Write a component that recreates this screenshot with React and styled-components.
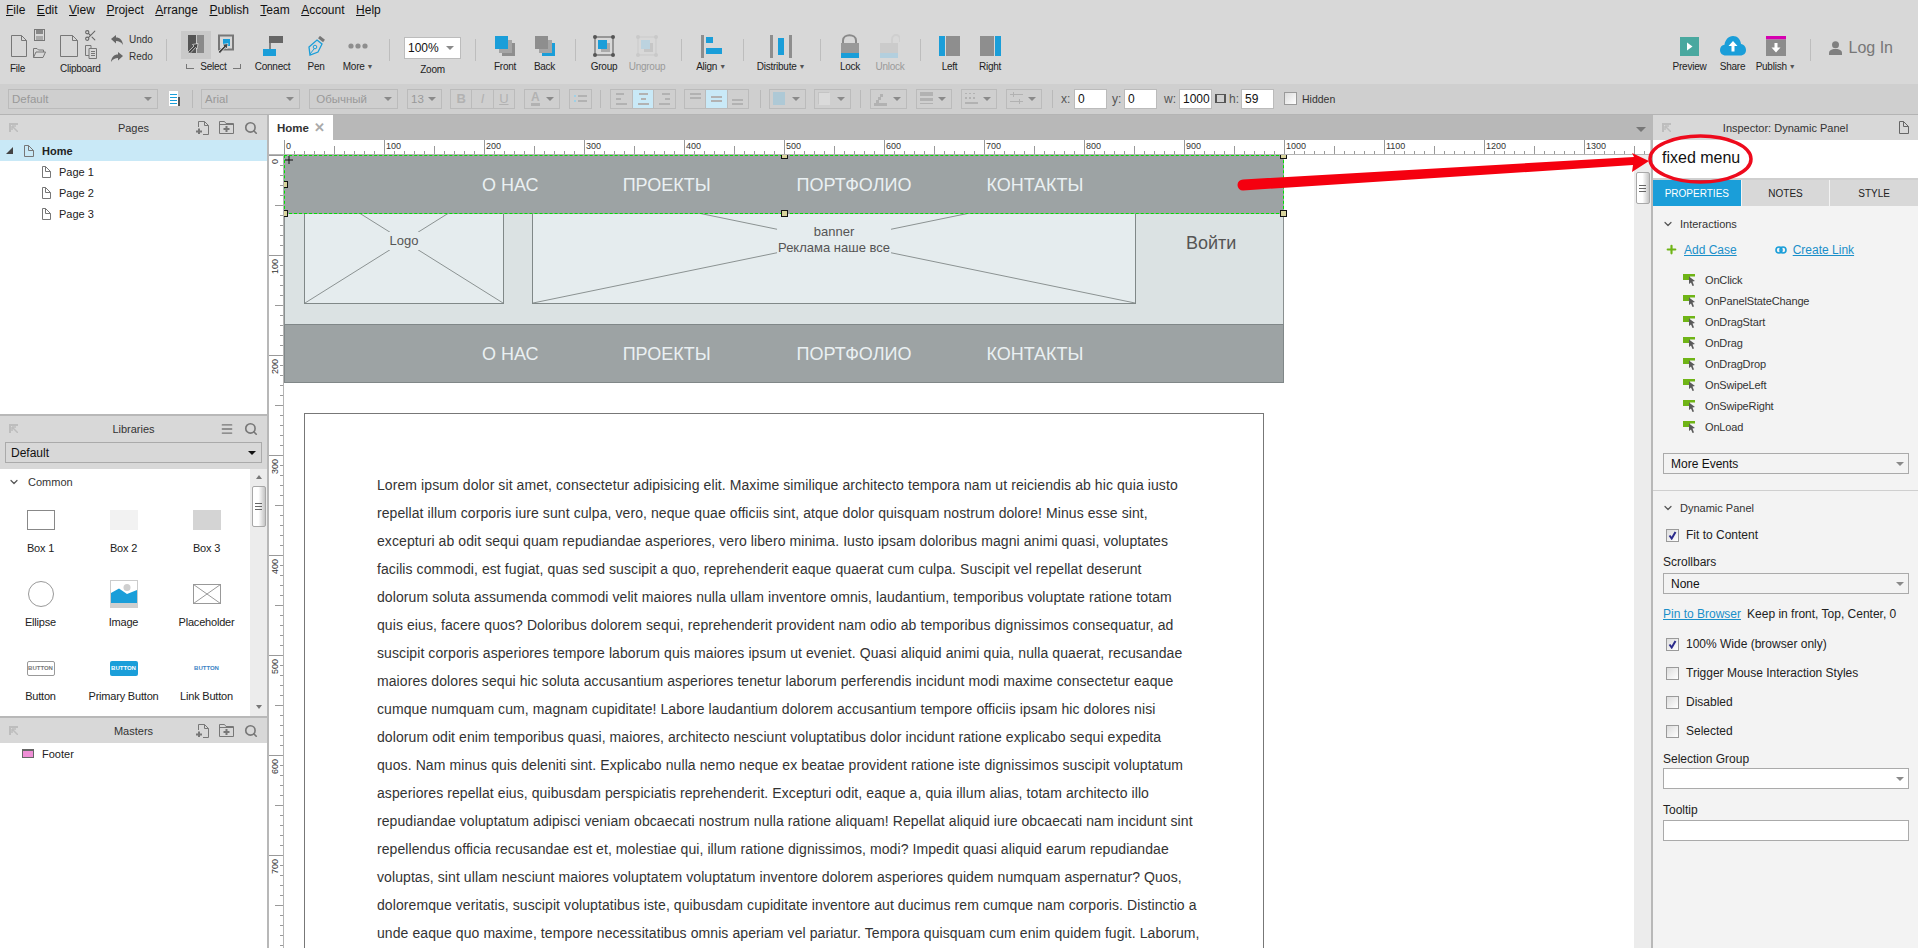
import React from "react";
import styled, { createGlobalStyle } from "styled-components";
import { Scissors, Search, ChevronDown, Menu as MenuIcon, Plus } from "lucide-react";

const GlobalStyle = createGlobalStyle`
  html, body { margin: 0; padding: 0; height: 100%; overflow: hidden; background: #fff; }
  body { font-family: "Liberation Sans", Arial, sans-serif; color: #222; }
  * { box-sizing: border-box; }
`;

const BLUE = "#1a9ed9";
const GREY = "#8e8e8e";

// Data
const menuItems = ["File", "Edit", "View", "Project", "Arrange", "Publish", "Team", "Account", "Help"];
const navItems = ["О НАС", "ПРОЕКТЫ", "ПОРТФОЛИО", "КОНТАКТЫ"];
const events = ["OnClick", "OnPanelStateChange", "OnDragStart", "OnDrag", "OnDragDrop", "OnSwipeLeft", "OnSwipeRight", "OnLoad"];
const loremLines = [
  "Lorem ipsum dolor sit amet, consectetur adipisicing elit. Maxime similique architecto tempora nam ut reiciendis ab hic quia iusto",
  "repellat illum corporis iure sunt culpa, vero, neque quae officiis sint, atque dolor quisquam nostrum dolore! Minus esse sint,",
  "excepturi ab odit sequi quam repudiandae asperiores, vero libero minima. Iusto ipsam doloribus magni animi quasi, voluptates",
  "facilis commodi, est fugiat, quas sed suscipit a quo, reprehenderit eaque quaerat cum culpa. Suscipit vel repellat deserunt",
  "dolorum soluta assumenda commodi velit maiores nulla ullam inventore omnis, laudantium, temporibus voluptate ratione totam",
  "quis eius, facere quos? Doloribus dolorem sequi, reprehenderit provident nam odio ab temporibus dignissimos consequatur, ad",
  "suscipit corporis asperiores tempore laborum quis maiores ipsum ut eveniet. Quasi aliquid animi quia, nulla quaerat, recusandae",
  "maiores dolores sequi hic soluta accusantium asperiores tenetur laborum perferendis incidunt modi maxime consectetur eaque",
  "cumque numquam cum, magnam cupiditate! Labore laudantium dolorem accusantium tempore officiis ipsam hic dolores nisi",
  "dolorum odit enim temporibus quasi, maiores, architecto nesciunt voluptatibus dolor incidunt ratione explicabo sequi expedita",
  "quos. Nam minus quis deleniti sint. Explicabo nulla nemo neque ex beatae provident ratione iste dignissimos suscipit voluptatum",
  "asperiores repellat eius, quibusdam perspiciatis reprehenderit. Excepturi odit, eaque a, quia illum alias, totam architecto illo",
  "repudiandae voluptatum adipisci veniam obcaecati nostrum nulla ratione aliquam! Repellat aliquid iure obcaecati nam incidunt sint",
  "repellendus officia recusandae est et, molestiae qui, illum ratione dignissimos, modi? Impedit quasi aliquid earum repudiandae",
  "voluptas, sint ullam nesciunt maiores voluptatem voluptatum inventore dolorem asperiores quidem numquam aspernatur? Quos,",
  "doloremque veritatis, suscipit voluptatibus iste, quibusdam cupiditate inventore aut ducimus rem cumque nam corporis. Distinctio a",
  "unde eaque quo maxime, tempore necessitatibus omnis aperiam vel pariatur. Tempora quisquam cum enim quidem fugit. Laborum,",
];

// Small drawings
const Rects = ({ w, h, items, c = GREY }) => (
  <svg width={w} height={h} viewBox={`0 0 ${w} ${h}`}>
    {items.map(([x, y, rw, rh, fill], i) => (
      <rect key={i} x={x} y={y} width={rw} height={rh} fill={fill || c} />
    ))}
  </svg>
);

const PageIcon = ({ w = 16, h = 22, c = "#777" }) => (
  <svg width={w} height={h} viewBox={`0 0 ${w} ${h}`} fill="none" stroke={c}>
    <path d={`M.5.5H${w - 5.5}L${w - .5} 5.5V${h - .5}H.5Z M${w - 5.5} .5V5.5H${w - .5}`} />
  </svg>
);

const SaveIcon = () => (
  <svg width="11" height="12" viewBox="0 0 11 12">
    <rect x=".5" y=".5" width="10" height="11" fill="none" stroke="#777" />
    <rect x="2" y="1" width="7" height="4" fill="#888" />
    <rect x="2" y="7" width="7" height="4" fill="#aaa" />
  </svg>
);

const FolderIcon = () => (
  <svg width="13" height="10" viewBox="0 0 13 10" fill="none" stroke="#777">
    <path d="M.5 9.5V.5H4L5.5 2H10.5V4M.5 9.5L3 4H12.5L10 9.5Z" />
  </svg>
);

const CopyIcon = () => (
  <svg width="12" height="14" viewBox="0 0 12 14" fill="none" stroke="#777">
    <path d="M.5.5H6V10.5H.5Z" />
    <path d="M4 3.5H11.5V13.5H4Z" fill="#d8d8d8" />
    <path d="M6 6.5H10M6 8.5H10M6 10.5H10" />
  </svg>
);

const UndoIcon = ({ flip }) => (
  <svg width="12" height="10" viewBox="0 0 12 10">
    <path transform={flip ? "translate(12 0) scale(-1 1)" : undefined} d="M0 4L5 0V2.5C9 2.5 11.5 5 12 10C10 7 8 6 5 6V8.5Z" fill="#666" />
  </svg>
);

const PointerMark = () => <path d="M1 18L7 12L5.5 10.5L11 9.5L10 15L8.5 13.5L3 19.5Z" fill="#444" stroke="#fff" strokeWidth=".6" />;

const SelectOneIcon = () => (
  <svg width="18" height="22" viewBox="0 0 18 22">
    <rect x="1" y="1" width="8" height="18" fill="#555" />
    <rect x="10" y="1" width="7" height="18" fill="#8a8a8a" />
    <PointerMark />
  </svg>
);

const SelectTwoIcon = () => (
  <svg width="18" height="22" viewBox="0 0 18 22">
    <rect x="2" y="1.5" width="14" height="14" fill="#d8d8d8" stroke="#777" strokeWidth="2" />
    <rect x="6" y="5" width="7" height="7" fill={BLUE} />
    <PointerMark />
  </svg>
);

const ConnectIcon = () => (
  <svg width="20" height="20" viewBox="0 0 20 20">
    <rect x="6" y="0" width="14" height="7" fill="#666" />
    <path d="M7 7V13" stroke="#666" strokeWidth="1.5" />
    <rect x="0" y="13" width="13" height="7" fill={BLUE} />
  </svg>
);

const PenIcon = () => (
  <svg width="18" height="20" viewBox="0 0 18 20" fill="none">
    <path d="M12 1L17 5" stroke="#777" strokeWidth="3" />
    <path d="M10 4L15 8L11 16L3 19L2 11Z" stroke={BLUE} strokeWidth="1.3" />
    <circle cx="8" cy="11" r="1.8" stroke={BLUE} />
    <path d="M3 18L7 13" stroke={BLUE} />
  </svg>
);

const DotsIcon = () => (
  <svg width="20" height="20" viewBox="0 0 20 20" fill="#8e8e8e">
    <circle cx="3" cy="10" r="2.6" /><circle cx="10" cy="10" r="2.6" /><circle cx="17" cy="10" r="2.6" />
  </svg>
);

const StackIcon = ({ top, mid, low }) => (
  <Rects w={20} h={20} items={[
    [7, 7, 13, 13, low],
    [4, 4, 13, 13, mid],
    [0, 0, 13, 13, top],
  ]} />
);

const GroupIcon = ({ faded }) => {
  const c = faded ? "#c9c9c9" : "#555";
  return (
    <svg width="22" height="22" viewBox="0 0 22 22">
      <rect x="2" y="2" width="18" height="18" fill="none" stroke={c} />
      <rect x="8" y="8" width="9" height="9" fill={faded ? "#c6c6c6" : "#aaa"} />
      <rect x="5" y="5" width="9" height="9" fill={faded ? "#bcd3df" : BLUE} />
      {[[2, 2], [20, 2], [2, 20], [20, 20]].map(([x, y]) => <circle key={`${x}${y}`} cx={x} cy={y} r="2" fill={c} />)}
    </svg>
  );
};

const LockIcon = ({ faded }) => (
  <svg width="20" height="24" viewBox="0 0 20 24" fill="none">
    {faded
      ? <path d="M12 10V5.5C12 -.5 20 -.5 20 5.5V8" stroke="#cfcfcf" strokeWidth="2" />
      : <path d="M3 10V6.5C3 -.5 16 -.5 16 6.5V10" stroke="#8a8a8a" strokeWidth="2" />}
    <rect x={faded ? 0 : 1} y="9" width="18" height="10" fill={faded ? "#cbcbcb" : "#999"} />
    <rect x={faded ? 0 : 1} y="19" width="18" height="5" fill={faded ? "#b3cfde" : BLUE} />
  </svg>
);

const PreviewIcon = () => (
  <svg width="19" height="19" viewBox="0 0 19 19">
    <rect width="19" height="19" fill="#49a89f" />
    <path d="M7 5.5L12.5 9.5L7 13.5Z" fill="#fff" />
  </svg>
);

const ShareIcon = () => (
  <svg width="26" height="20" viewBox="0 0 26 20">
    <path d="M6 19.5C2 19.5 0 17 0 14C0 11 2 9 4.5 8.8C5 4 8.5 0 13 0C17.5 0 20.5 3.5 21 8C24 8.5 26 11 26 14C26 17 24 19.5 20 19.5Z" fill={BLUE} />
    <path d="M13 5L17.5 10H14.5V15.5H11.5V10H8.5Z" fill="#fff" />
  </svg>
);

const PublishIcon = () => (
  <svg width="20" height="20" viewBox="0 0 20 20">
    <rect width="20" height="3.5" fill="#d600b0" />
    <rect y="3.5" width="20" height="16.5" fill="#8c8c8c" />
    <path d="M10 16.5L5.5 11.5H8.5V7H11.5V11.5H14.5Z" fill="#fff" />
  </svg>
);

const UserIcon = () => (
  <svg width="13" height="14" viewBox="0 0 13 14" fill="#808080">
    <circle cx="6.5" cy="3.7" r="3.5" />
    <path d="M0 14V11.5C0 9.5 2.5 8.5 4.5 8H8.5C10.5 8.5 13 9.5 13 11.5V14Z" />
  </svg>
);

const DockIcon = () => (
  <svg width="9" height="9" viewBox="0 0 9 9" fill="#bdbdbd">
    <path d="M0 0H9V2H2V9H0Z" /><path d="M3 3L9 9M3 3V7M3 3H7" stroke="#bdbdbd" strokeWidth="1.5" />
  </svg>
);

const NewPageIcon = () => (
  <svg width="14" height="14" viewBox="0 0 14 14" fill="none" stroke="#777">
    <path d="M3.5 6V.5H9.5L13.5 4.5V13.5H8" /><path d="M9.5.5V4.5H13.5" />
    <path d="M4 7.5V13M1 10.5H7" strokeWidth="2" />
  </svg>
);

const NewFolderIcon = () => (
  <svg width="15" height="13" viewBox="0 0 15 13" fill="none" stroke="#777">
    <path d="M.5 12.5V.5H5.5L7 2.5H14.5V12.5Z" />
    <path d="M.5 3.5H14.5" /><path d="M7.5 5V11M4.5 8H10.5" strokeWidth="2" />
  </svg>
);

const EventIcon = () => (
  <svg width="13" height="12" viewBox="0 0 13 12">
    <path d="M0 0H12V2.5H7V6H0Z" fill="#6fb416" />
    <path d="M6 2.5L12 7L9.5 7.5L11 11.5L9.5 12L8 8.5L6 10Z" fill="#5a5a5a" />
  </svg>
);

const LinkIcon = () => (
  <svg width="12" height="8" viewBox="0 0 12 8" fill="none" stroke={BLUE} strokeWidth="1.6">
    <rect x="1" y="1" width="6" height="6" rx="3" /><rect x="5" y="1" width="6" height="6" rx="3" />
  </svg>
);

const CheckMark = () => (
  <svg width="9" height="9" viewBox="0 0 9 9"><path d="M1.5 4.5L3.7 7.5L7.5 1" fill="none" stroke="#2b2b8c" strokeWidth="2" /></svg>
);

const ImageIcon = () => (
  <svg width="28" height="28" viewBox="0 0 28 28">
    <rect x=".5" y=".5" width="27" height="27" fill="#fff" stroke="#ccc" />
    <rect y="23" width="28" height="5" fill="#cfcfcf" />
    <circle cx="17" cy="7.5" r="3.5" fill="#cfcfcf" />
    <path d="M1 23V13L9 8.5L17 14L27 10V23Z" fill={BLUE} />
  </svg>
);

const PlaceholderIcon = () => (
  <svg width="28" height="20" viewBox="0 0 28 20" fill="none" stroke="#999">
    <rect x=".5" y=".5" width="27" height="19" /><path d="M.5.5L27.5 19.5M27.5.5L.5 19.5" />
  </svg>
);

const OriginCross = () => (
  <svg width="8" height="8" viewBox="0 0 8 8"><path d="M4 0V8M0 4H8" stroke="#111" strokeWidth="1" /></svg>
);

// Shell
const Page = styled.div`
  position: relative;
  width: 1918px;
  height: 948px;
  overflow: hidden;
  background: #d8d8d8;
`;

const MenuBar = styled.nav`
  display: flex;
  height: 20px;
  padding-left: 6px;
  gap: 11.5px;
  align-items: center;
  font-size: 12px;
  color: #111;
`;

const MenuEntry = styled.span`
  &::first-letter { text-decoration: underline; }
`;

const Toolbar = styled.div`
  display: flex;
  height: 64px;
  padding-top: 11px;
  align-items: flex-start;
`;

const Tool = styled.div`
  display: flex;
  flex-direction: column;
  align-items: center;
  flex: none;
  width: ${(p) => p.$w}px;
  margin-left: ${(p) => p.$ml || 0}px;
`;

const ToolIcon = styled.div`
  display: flex;
  align-items: center;
  justify-content: center;
  height: 28px;
  width: 100%;
  padding-top: 2px;
`;

const ToolLabel = styled.div`
  display: flex;
  align-items: center;
  gap: 2px;
  height: 14px;
  font-size: 10px;
  letter-spacing: -0.25px;
  white-space: nowrap;
  color: ${(p) => (p.$off ? "#9a9a9a" : "#222")};
`;

const SmallMark = styled.span`
  font-size: 7px;
  color: #555;
`;

const ToolSep = styled.div`
  flex: none;
  width: 1px;
  height: 22px;
  margin: 8px ${(p) => p.$r || 0}px 0 ${(p) => p.$l || 0}px;
  background: #bdbdbd;
`;

const SmallStack = styled.div`
  display: flex;
  flex-direction: column;
  gap: ${(p) => p.$gap || 7}px;
  align-items: center;
  margin-top: -5px;
`;

const SplitTool = styled.div`
  display: flex;
  flex-direction: column;
  flex: none;
  width: ${(p) => p.$w}px;
  padding-left: ${(p) => p.$pl || 0}px;
`;

const SplitIcons = styled.div`
  display: flex;
  align-items: center;
  gap: 6px;
  height: 28px;
  padding-top: 2px;
`;

const SplitLabel = styled(ToolLabel)`
  margin-top: 2px;
  margin-left: ${(p) => p.$ml || 0}px;
`;

const UndoRow = styled.div`
  display: flex;
  align-items: center;
  gap: 6px;
  height: 17px;
  font-size: 10px;
  color: #333;
`;

const UndoTool = styled.div`
  flex: none;
  width: 60px;
  padding-left: 5px;
`;

const SelectTool = styled.div`
  flex: none;
  width: 64px;
`;

const SelectIcons = styled.div`
  display: flex;
  align-items: center;
  height: 28px;
`;

const SelectCell = styled.div`
  display: flex;
  align-items: center;
  justify-content: center;
  width: 30px;
  height: 28px;
  background: ${(p) => (p.$on ? "#c9c9c9" : "transparent")};
`;

const SelectCaption = styled.div`
  display: flex;
  justify-content: space-between;
  align-items: center;
  height: 14px;
  width: 55px;
  margin-left: 5px;
  font-size: 10px;
  letter-spacing: -0.25px;
`;

const Corner = styled.span`
  width: 8px;
  height: 5px;
  border-bottom: 1px solid #777;
  border-${(p) => p.$side}: 1px solid #777;
`;

const ZoomBox = styled.div`
  display: flex;
  align-items: center;
  justify-content: space-between;
  width: 57px;
  height: 22px;
  margin: 6px 0 3px;
  padding: 0 6px 0 3px;
  background: #fff;
  border: 1px solid #bcbcbc;
  font-size: 12px;
  color: #111;
`;

const Caret = styled.span`
  flex: none;
  width: 0;
  height: 0;
  border-left: ${(p) => p.$s || 4}px solid transparent;
  border-right: ${(p) => p.$s || 4}px solid transparent;
  border-top: ${(p) => p.$s || 4}px solid ${(p) => p.$c || "#8a8a8a"};
`;

const RightTools = styled.div`
  display: flex;
  align-items: flex-start;
  margin-left: auto;
`;

const LogIn = styled.div`
  display: flex;
  align-items: center;
  gap: 7px;
  height: 20px;
  margin: 7px 25px 0 18px;
  font-size: 16px;
  color: #777;
`;

// Format bar
const FormatBar = styled.div`
  display: flex;
  align-items: center;
  height: 31px;
  padding: 0 0 1px 8px;
  background: #cfcfcf;
  border-bottom: 1px solid #b4b4b4;
`;

const FormatSelect = styled.div`
  display: flex;
  align-items: center;
  justify-content: space-between;
  flex: none;
  width: ${(p) => p.$w}px;
  height: 20px;
  margin-left: ${(p) => p.$ml || 0}px;
  padding: 0 5px 0 3px;
  border: 1px solid #bbb;
  font-size: 11.5px;
  color: #999;
`;

const StyleIconSlot = styled.span`
  display: flex;
  flex: none;
  margin-left: 10px;
`;

const FormatSep = styled.div`
  flex: none;
  width: 1px;
  height: 18px;
  margin-left: ${(p) => p.$ml}px;
  background: #b9b9b9;
`;

const CellGroup = styled.div`
  display: flex;
  flex: none;
  width: ${(p) => p.$w}px;
  height: 20px;
  margin-left: ${(p) => p.$ml || 0}px;
  border: 1px solid #bbb;
`;

const Cell = styled.div`
  display: flex;
  flex: 1;
  align-items: center;
  justify-content: center;
  font-size: 13px;
  color: #b2b2b2;
  font-weight: ${(p) => (p.$bold ? 700 : 400)};
  font-style: ${(p) => (p.$italic ? "italic" : "normal")};
  text-decoration: ${(p) => (p.$under ? "underline" : "none")};
  background: ${(p) => (p.$on ? "#c9e9f7" : "transparent")};
  & + & { border-left: 1px solid #bbb; }
`;

const ColorLetter = styled.span`
  margin-left: 3px;
  height: 15px;
  line-height: 12px;
  font-size: 12px;
  font-weight: 700;
  color: #b2b2b2;
  border-bottom: 3px solid #b2b2b2;
`;

const CoordLabel = styled.span`
  flex: none;
  width: ${(p) => p.$w}px;
  margin-left: ${(p) => p.$ml || 0}px;
  font-size: 12px;
  color: #555;
`;

const CoordInput = styled.div`
  flex: none;
  width: 33px;
  height: 20px;
  padding: 0 3px;
  line-height: 19px;
  background: #fff;
  border: 1px solid #bbb;
  font-size: 12px;
  color: #111;
`;

const SizeLink = styled.span`
  display: flex;
  justify-content: space-between;
  flex: none;
  width: 11px;
  height: 9px;
  margin-left: 3px;
  &::before, &::after {
    content: "";
    width: 4px;
    border-style: solid;
    border-color: #555;
  }
  &::before { border-width: 1px 0 1px 2px; }
  &::after { border-width: 1px 2px 1px 0; }
`;

const CheckBox = styled.span`
  display: flex;
  flex: none;
  align-items: center;
  justify-content: center;
  width: 13px;
  height: 13px;
  border: 1px solid #9a9a9a;
  background: linear-gradient(135deg, #dcdcdc, #fff);
`;

const HiddenRow = styled.label`
  display: flex;
  align-items: center;
  gap: 5px;
  margin-left: 10px;
  font-size: 10.5px;
  color: #333;
`;

// Body
const Body = styled.div`
  display: flex;
  height: 833px;
`;

const LeftPanel = styled.aside`
  display: flex;
  flex-direction: column;
  flex: none;
  width: 269px;
  background: #fff;
  border-right: 2px solid #b8b8b8;
`;

const PanelHead = styled.header`
  display: grid;
  grid-template-columns: 1fr auto 1fr;
  align-items: center;
  flex: none;
  height: 25px;
  padding: 0 9px;
  background: #d8d8d8;
  font-size: 11px;
  color: #333;
`;

const HeadIcons = styled.div`
  display: flex;
  align-items: center;
  justify-content: flex-end;
  gap: 10px;
  color: #777;
`;

const PagesPane = styled.section`
  flex: none;
  height: 299px;
`;

const PageRow = styled.div`
  display: flex;
  align-items: center;
  height: 21px;
  padding-left: ${(p) => (p.$home ? 6 : 42)}px;
  gap: 8px;
  font-size: 11px;
  font-weight: ${(p) => (p.$home ? 700 : 400)};
  color: #222;
  background: ${(p) => (p.$home ? "#c9e9f7" : "transparent")};
`;

const Triangle = styled.span`
  width: 0;
  height: 0;
  border-left: 7px solid transparent;
  border-bottom: 7px solid #444;
  margin-right: 3px;
`;

const PaneLine = styled.div`
  flex: none;
  height: 2px;
  background: #b8b8b8;
`;

const LibSelectBar = styled.div`
  flex: none;
  height: 28px;
  padding: 1px 5px 0;
  background: #d8d8d8;
`;

const LibSelect = styled.div`
  display: flex;
  align-items: center;
  justify-content: space-between;
  height: 21px;
  padding: 0 5px;
  border: 1px solid #aaa;
  font-size: 12px;
  color: #111;
`;

const LibBody = styled.div`
  display: flex;
  flex: none;
  height: 247px;
`;

const LibList = styled.div`
  flex: 1;
  overflow: hidden;
`;

const SectionTitle = styled.div`
  display: flex;
  align-items: center;
  gap: ${(p) => p.$gap || 8}px;
  height: 16px;
  margin: ${(p) => p.$mt || 0}px 0 0 ${(p) => p.$ml || 8}px;
  font-size: 11px;
  color: #333;
`;

const LibGrid = styled.div`
  display: grid;
  grid-template-columns: repeat(3, 83px);
  grid-auto-rows: 74px;
  margin: 15px 0 0 -1px;
`;

const LibItem = styled.div`
  display: flex;
  flex-direction: column;
  align-items: center;
  font-size: 11px;
  letter-spacing: -0.2px;
  color: #222;
`;

const LibIcon = styled.div`
  display: flex;
  align-items: center;
  justify-content: center;
  height: 30px;
  margin-bottom: 7px;
`;

const Swatch = styled.div`
  width: 28px;
  height: 20px;
  background: ${(p) => p.$bg};
  border: ${(p) => (p.$line ? "1px solid #888" : "none")};
`;

const Round = styled.div`
  width: 26px;
  height: 26px;
  border-radius: 50%;
  border: 1px solid #999;
`;

const MiniButton = styled.div`
  display: flex;
  align-items: center;
  justify-content: center;
  width: 28px;
  height: 15px;
  font-size: 6px;
  font-weight: 700;
  letter-spacing: 0;
  border-radius: 2px;
  color: ${(p) => (p.$kind === "primary" ? "#fff" : p.$kind === "link" ? "#3b82c4" : "#777")};
  background: ${(p) => (p.$kind === "primary" ? BLUE : "transparent")};
  border: ${(p) => (p.$kind === "plain" ? "1px solid #999" : "none")};
`;

const ScrollTrack = styled.div`
  display: flex;
  flex-direction: column;
  align-items: center;
  justify-content: ${(p) => (p.$top ? "flex-start" : "space-between")};
  flex: none;
  width: 17px;
  background: #ececec;
`;

const ScrollThumb = styled.div`
  display: flex;
  align-items: center;
  justify-content: center;
  width: 14px;
  height: ${(p) => p.$h}px;
  margin-top: ${(p) => p.$mt || 0}px;
  border: 1px solid #a8a8a8;
  border-radius: 2px;
  background: linear-gradient(90deg, #fff, #fff 45%, #c4c4c4);
  &::after {
    content: "";
    width: 7px;
    height: 7px;
    background: repeating-linear-gradient(#666 0 1px, transparent 1px 3px);
  }
`;

const ScrollArrow = styled.span`
  width: 0;
  height: 0;
  margin: ${(p) => (p.$up ? "6px 0 0" : "0 0 7px")};
  border-left: 3px solid transparent;
  border-right: 3px solid transparent;
  ${(p) => (p.$up ? "border-bottom" : "border-top")}: 4px solid #777;
`;

const ScrollTop = styled.div`
  display: flex;
  flex-direction: column;
  align-items: center;
`;

const FooterRow = styled.div`
  display: flex;
  align-items: center;
  gap: 8px;
  height: 21px;
  padding-left: 22px;
  font-size: 11px;
  color: #222;
`;

const MasterIcon = styled.span`
  width: 12px;
  height: 9px;
  border: 1px solid #666;
  border-top-width: 2px;
  background: #ef8fd6;
`;

// Centre
const Center = styled.main`
  display: flex;
  flex-direction: column;
  flex: 1;
  min-width: 0;
`;

const TabBar = styled.div`
  display: flex;
  align-items: stretch;
  justify-content: space-between;
  flex: none;
  height: 25px;
  background: #b8b8b8;
`;

const Tab = styled.div`
  display: flex;
  align-items: center;
  justify-content: space-between;
  width: 64px;
  padding: 0 8px;
  background: #fff;
  font-size: 11.5px;
  font-weight: 700;
  color: #333;
`;

const TabClose = styled.span`
  font-size: 13px;
  color: #aaa;
`;

const TabMenu = styled.div`
  display: flex;
  align-items: center;
  padding: 3px 5px 0 0;
`;

const RulerTop = styled.svg`
  display: block;
  flex: none;
  font-family: "Liberation Sans", Arial, sans-serif;
  font-size: 9px;
`;

const Workspace = styled.div`
  display: flex;
  flex: 1;
  min-height: 0;
`;

const RulerSide = styled.svg`
  display: block;
  flex: none;
  font-family: "Liberation Sans", Arial, sans-serif;
  font-size: 9px;
`;

const Canvas = styled.div`
  position: relative;
  flex: 1;
  overflow: hidden;
  background: #fff;
`;

const SiteHeader = styled.div`
  display: flex;
  width: 1000px;
  height: 169px;
  padding: 23px 0 0 19px;
  background: #dbe2e3;
  border-left: 1px solid #8a9090;
  border-right: 1px solid #8a9090;
`;

const Placeholder = styled.div`
  position: relative;
  flex: none;
  width: ${(p) => p.$w}px;
  height: 126px;
  margin-left: ${(p) => p.$ml || 0}px;
  background: #e5ecee;
  border: 1px solid #808888;
  svg { display: block; width: 100%; height: 100%; }
`;

const PlaceholderText = styled.div`
  position: absolute;
  top: ${(p) => p.$top}px;
  left: 50%;
  transform: translateX(-50%);
  padding: ${(p) => p.$pad};
  background: #e5ecee;
  text-align: center;
  font-size: 13px;
  line-height: 16px;
  white-space: nowrap;
  color: #555;
`;

const SignIn = styled.div`
  margin: 55px 0 0 50px;
  font-size: 18px;
  line-height: 20px;
  color: #555;
`;

const SiteNav = styled.div`
  display: flex;
  align-items: center;
  width: 1000px;
  height: 59px;
  padding: 1px 0 0 197px;
  background: #9da3a4;
  border: 1px solid #808788;
  font-size: 18px;
  color: #eaf0f2;
`;

const NavLink = styled.span`
  margin-left: ${(p) => p.$ml}px;
  white-space: nowrap;
`;

const FixedMenu = styled(SiteNav)`
  position: absolute;
  top: 0;
  left: 0;
  border: 1px dashed #00e000;
`;

const Handle = styled.i`
  position: absolute;
  left: ${(p) => p.$x}px;
  top: ${(p) => p.$y}px;
  width: 7px;
  height: 7px;
  background: #d8d49c;
  border: 1px solid #111;
`;

const OriginMark = styled.span`
  position: absolute;
  display: flex;
  left: 0;
  top: 0;
`;

const TextFrame = styled.div`
  width: 960px;
  height: 700px;
  margin: 30px 0 0 20px;
  padding: 57px 0 0 72px;
  border: 1px solid #777;
  font-size: 14px;
  line-height: 28px;
  letter-spacing: 0.085px;
  color: #333;
`;

const TextLine = styled.div`
  white-space: nowrap;
`;

// Inspector
const RightPanel = styled.aside`
  flex: none;
  width: 267px;
  height: 833px;
  overflow: hidden;
  background: #f3f3f3;
  border-left: 2px solid #b8b8b8;
`;

const NameField = styled.div`
  display: flex;
  align-items: center;
  height: 40px;
  padding: 0 0 2px 9px;
  background: #fff;
  border-bottom: 2px solid #cfcfcf;
  font-size: 16px;
  color: #111;
`;

const Tabs = styled.div`
  display: flex;
  height: 26px;
  gap: 1px;
`;

const InspectorTab = styled.div`
  display: flex;
  flex: 1;
  align-items: center;
  justify-content: center;
  font-size: 10px;
  background: ${(p) => (p.$on ? BLUE : "#d8d8d8")};
  color: ${(p) => (p.$on ? "#fff" : "#222")};
`;

const LinkRow = styled.div`
  display: flex;
  align-items: center;
  height: 17px;
  margin: 9px 0 0 12px;
`;

const Anchor = styled.a`
  font-size: 12px;
  color: #1a8fc9;
  text-decoration: underline;
  margin-left: ${(p) => p.$ml || 0}px;
`;

const LinkSlot = styled.span`
  display: flex;
  margin-left: 38px;
`;

const EventList = styled.div`
  margin: 11px 0 0 30px;
`;

const EventRow = styled.div`
  display: flex;
  align-items: center;
  gap: 9px;
  height: 21px;
  font-size: 11px;
  letter-spacing: -0.15px;
  color: #333;
`;

const PropSelect = styled.div`
  display: flex;
  align-items: center;
  justify-content: space-between;
  width: 246px;
  height: 21px;
  margin: ${(p) => p.$mt || 0}px 0 0 10px;
  padding: 0 4px 0 7px;
  background: ${(p) => (p.$white ? "#fff" : "transparent")};
  border: 1px solid #aaa;
  font-size: 12px;
  color: #111;
`;

const Divider = styled.div`
  height: 1px;
  margin-top: 16px;
  background: #cfcfcf;
`;

const CheckRow = styled.div`
  display: flex;
  align-items: center;
  gap: 7px;
  height: 14px;
  margin: ${(p) => p.$mt || 15}px 0 0 13px;
  font-size: 12px;
  color: #222;
`;

const PropLabel = styled.div`
  height: 14px;
  line-height: 14px;
  margin: ${(p) => p.$mt}px 0 0 10px;
  font-size: 12px;
  color: #222;
`;

const PinRow = styled.div`
  display: flex;
  gap: 6px;
  height: 14px;
  line-height: 14px;
  margin: 13px 0 0 10px;
  font-size: 12px;
  white-space: nowrap;
  color: #222;
`;

const Overlay = styled.svg`
  position: absolute;
  inset: 0;
  pointer-events: none;
`;

// Composite parts
const ToolItem = ({ w, ml, icon, label, off, more }) => (
  <Tool $w={w} $ml={ml}>
    <ToolIcon>{icon}</ToolIcon>
    <ToolLabel $off={off}>{label}{more && <SmallMark>▼</SmallMark>}</ToolLabel>
  </Tool>
);

const HRuler = ({ width, origin }) => {
  const marks = [];
  for (let v = 0; origin + v < width; v += 10) marks.push(v);
  return (
    <RulerTop width={width} height={15}>
      <rect width={width} height={15} fill="#fff" />
      {marks.map((v) => {
        const x = origin + v + 0.5;
        const len = v % 100 === 0 ? 15 : v % 50 === 0 ? 9 : 4;
        return <path key={v} d={`M${x} ${15 - len}V15`} stroke="#999" />;
      })}
      {marks.filter((v) => v % 100 === 0).map((v) => (
        <text key={v} x={origin + v + 2} y={9} fill="#333">{v}</text>
      ))}
      <path d={`M0 14.5H${width}`} stroke="#b5b5b5" />
    </RulerTop>
  );
};

const VRuler = ({ height }) => {
  const marks = [];
  for (let v = 0; v < height; v += 10) marks.push(v);
  return (
    <RulerSide width={15} height={height}>
      <rect width={15} height={height} fill="#fff" />
      {marks.map((v) => {
        const len = v % 100 === 0 ? 15 : v % 50 === 0 ? 9 : 4;
        return <path key={v} d={`M${15 - len} ${v + 0.5}H15`} stroke="#999" />;
      })}
      {marks.filter((v) => v % 100 === 0).map((v) => (
        <text key={v} transform={`translate(9 ${v + 4}) rotate(-90)`} textAnchor="end" fill="#333">{v}</text>
      ))}
      <path d={`M14.5 0V${height}`} stroke="#b5b5b5" />
    </RulerSide>
  );
};

const NavLinks = () => (
  <>
    {navItems.map((t, i) => (
      <NavLink key={t} $ml={[0, 84, 86, 75][i]}>{t}</NavLink>
    ))}
  </>
);

const Cross = () => (
  <svg viewBox="0 0 100 100" preserveAspectRatio="none">
    <path d="M0 0L100 100M100 0L0 100" stroke="#8b9292" strokeWidth="1" vectorEffect="non-scaling-stroke" fill="none" />
  </svg>
);

const library = [
  ["Box 1", <Swatch $bg="#fff" $line />],
  ["Box 2", <Swatch $bg="#f2f2f2" />],
  ["Box 3", <Swatch $bg="#d4d4d4" />],
  ["Ellipse", <Round />],
  ["Image", <ImageIcon />],
  ["Placeholder", <PlaceholderIcon />],
  ["Button", <MiniButton $kind="plain">BUTTON</MiniButton>],
  ["Primary Button", <MiniButton $kind="primary">BUTTON</MiniButton>],
  ["Link Button", <MiniButton $kind="link">BUTTON</MiniButton>],
];

const App = () => (
  <Page>
    <GlobalStyle />
    <MenuBar>
      {menuItems.map((name) => <MenuEntry key={name}>{name}</MenuEntry>)}
    </MenuBar>

    <Toolbar>
      <SplitTool $w={52} $pl={11}>
        <SplitIcons>
          <PageIcon />
          <SmallStack><SaveIcon /><FolderIcon /></SmallStack>
        </SplitIcons>
        <SplitLabel $ml={-1}>File</SplitLabel>
      </SplitTool>
      <SplitTool $w={54} $pl={8}>
        <SplitIcons>
          <PageIcon w={18} />
          <SmallStack $gap={3}><Scissors size={13} color="#666" /><CopyIcon /></SmallStack>
        </SplitIcons>
        <SplitLabel>Clipboard</SplitLabel>
      </SplitTool>
      <UndoTool>
        <UndoRow><UndoIcon />Undo</UndoRow>
        <UndoRow><UndoIcon flip />Redo</UndoRow>
      </UndoTool>
      <ToolSep $r={14} />
      <SelectTool>
        <SelectIcons>
          <SelectCell $on><SelectOneIcon /></SelectCell>
          <SelectCell><SelectTwoIcon /></SelectCell>
        </SelectIcons>
        <SelectCaption><Corner $side="left" />Select<Corner $side="right" /></SelectCaption>
      </SelectTool>
      <ToolItem w={45} ml={5} icon={<ConnectIcon />} label="Connect" />
      <ToolItem w={42} icon={<PenIcon />} label="Pen" />
      <ToolItem w={42} icon={<DotsIcon />} label="More" more />
      <ToolSep $l={10} />
      <Tool $w={85}>
        <ZoomBox>100%<Caret /></ZoomBox>
        <ToolLabel>Zoom</ToolLabel>
      </Tool>
      <ToolSep $r={9} />
      <ToolItem w={40} icon={<StackIcon top={BLUE} mid="#a5a5a5" low="#8e8e8e" />} label="Front" />
      <ToolItem w={39} icon={<StackIcon top="#8e8e8e" mid="#a5a5a5" low={BLUE} />} label="Back" />
      <ToolSep $l={11} $r={9} />
      <ToolItem w={38} icon={<GroupIcon />} label="Group" />
      <ToolItem w={48} icon={<GroupIcon faded />} label="Ungroup" off />
      <ToolSep $l={10} $r={8} />
      <ToolItem w={42} label="Align" more icon={<Rects w={21} h={23} items={[[0, 0, 3, 23], [5, 2, 7, 6, BLUE], [5, 13, 16, 6, BLUE]]} />} />
      <ToolSep $l={11} $r={11} />
      <ToolItem w={52} label="Distribute" more icon={<Rects w={22} h={23} items={[[0, 0, 3, 23], [19, 0, 3, 23], [8, 3, 6, 17, BLUE]]} />} />
      <ToolSep $l={13} $r={9} />
      <ToolItem w={40} icon={<LockIcon />} label="Lock" />
      <ToolItem w={40} icon={<LockIcon faded />} label="Unlock" off />
      <ToolSep $l={10} $r={9} />
      <ToolItem w={39} label="Left" icon={<Rects w={21} h={20} items={[[0, 0, 6, 20, BLUE], [7, 0, 14, 20]]} />} />
      <ToolItem w={42} label="Right" icon={<Rects w={21} h={20} items={[[0, 0, 14, 20], [15, 0, 6, 20, BLUE]]} />} />
      <RightTools>
        <ToolItem w={40} icon={<PreviewIcon />} label="Preview" />
        <ToolItem w={46} icon={<ShareIcon />} label="Share" />
        <ToolItem w={40} icon={<PublishIcon />} label="Publish" more />
        <ToolSep $l={14} />
        <LogIn><UserIcon />Log In</LogIn>
      </RightTools>
    </Toolbar>

    <FormatBar>
      <FormatSelect $w={150}>Default<Caret /></FormatSelect>
      <StyleIconSlot>
        <Rects w={14} h={15} c="#555" items={[[1, 0, 9, 15, "#fff"], [2, 3, 7, 1, BLUE], [2, 6, 7, 1, BLUE], [2, 9, 7, 1, BLUE], [2, 12, 7, 1, BLUE], [10, 6, 2, 9]]} />
      </StyleIconSlot>
      <FormatSep $ml={10} />
      <FormatSelect $w={99} $ml={8}>Arial<Caret /></FormatSelect>
      <FormatSelect $w={89} $ml={9}><span>&nbsp;Обычный</span><Caret /></FormatSelect>
      <FormatSelect $w={35} $ml={9}>13<Caret /></FormatSelect>
      <CellGroup $w={65} $ml={8}>
        <Cell $bold>B</Cell><Cell $italic>I</Cell><Cell $under>U</Cell>
      </CellGroup>
      <FormatSelect $w={36} $ml={9}><ColorLetter>A</ColorLetter><Caret /></FormatSelect>
      <CellGroup $w={23} $ml={9}>
        <Cell><Rects w={13} h={9} c="#b2b2b2" items={[[0, 1, 2, 2, "#9fd0e6"], [4, 1, 9, 2], [0, 6, 2, 2, "#9fd0e6"], [4, 6, 9, 2]]} /></Cell>
      </CellGroup>
      <FormatSep $ml={8} />
      <CellGroup $w={66} $ml={9}>
        <Cell><Rects w={11} h={12} c="#b2b2b2" items={[[0, 0, 8, 2], [0, 5, 5, 2], [0, 10, 11, 2]]} /></Cell>
        <Cell $on><Rects w={11} h={12} c="#b2b2b2" items={[[1, 0, 9, 2], [3, 5, 5, 2], [0, 10, 11, 2]]} /></Cell>
        <Cell><Rects w={11} h={12} c="#b2b2b2" items={[[3, 0, 8, 2], [6, 5, 5, 2], [0, 10, 11, 2]]} /></Cell>
      </CellGroup>
      <CellGroup $w={65} $ml={8}>
        <Cell><Rects w={11} h={12} c="#b2b2b2" items={[[0, 0, 11, 2], [0, 4, 11, 2]]} /></Cell>
        <Cell $on><Rects w={11} h={12} c="#b2b2b2" items={[[0, 3, 11, 2], [0, 7, 11, 2]]} /></Cell>
        <Cell><Rects w={11} h={12} c="#b2b2b2" items={[[0, 6, 11, 2], [0, 10, 11, 2]]} /></Cell>
      </CellGroup>
      <FormatSep $ml={11} />
      <FormatSelect $w={37} $ml={8}><Rects w={12} h={13} items={[[0, 0, 12, 13, "#aec9d6"]]} /><Caret /></FormatSelect>
      <FormatSelect $w={37} $ml={8}><Rects w={12} h={13} items={[[0, 0, 11, 12, "#c4c4c4"], [1, 1, 11, 12, "#dadada"]]} /><Caret /></FormatSelect>
      <FormatSep $ml={9} />
      <FormatSelect $w={37} $ml={9}><Rects w={13} h={14} c="#b2b2b2" items={[[0, 11, 13, 3], [6, 2, 3, 3], [4, 5, 3, 3], [2, 8, 3, 3]]} /><Caret /></FormatSelect>
      <FormatSelect $w={36} $ml={9}><Rects w={13} h={13} c="#b2b2b2" items={[[0, 0, 13, 4], [0, 6, 13, 3], [0, 11, 13, 1]]} /><Caret /></FormatSelect>
      <FormatSelect $w={36} $ml={9}><Rects w={13} h={13} c="#b2b2b2" items={[[0, 1, 2, 1], [4, 1, 2, 1], [8, 1, 2, 1], [0, 5, 2, 2], [4, 5, 2, 2], [8, 5, 2, 2], [0, 10, 13, 2]]} /><Caret /></FormatSelect>
      <FormatSelect $w={36} $ml={9}><Rects w={13} h={13} c="#b2b2b2" items={[[0, 2, 13, 1], [0, 9, 13, 1], [3, 0, 1, 5], [9, 7, 1, 5]]} /><Caret /></FormatSelect>
      <FormatSep $ml={10} />
      <CoordLabel $w={13} $ml={8}>x:</CoordLabel>
      <CoordInput>0</CoordInput>
      <CoordLabel $w={12} $ml={5}>y:</CoordLabel>
      <CoordInput>0</CoordInput>
      <CoordLabel $w={15} $ml={7}>w:</CoordLabel>
      <CoordInput>1000</CoordInput>
      <SizeLink />
      <CoordLabel $w={12} $ml={3}>h:</CoordLabel>
      <CoordInput>59</CoordInput>
      <HiddenRow><CheckBox />Hidden</HiddenRow>
    </FormatBar>

    <Body>
      <LeftPanel>
        <PagesPane>
          <PanelHead>
            <DockIcon />Pages
            <HeadIcons><NewPageIcon /><NewFolderIcon /><Search size={14} strokeWidth={2.8} /></HeadIcons>
          </PanelHead>
          <PageRow $home><Triangle /><PageIcon w={10} h={12} />Home</PageRow>
          {["Page 1", "Page 2", "Page 3"].map((p) => (
            <PageRow key={p}><PageIcon w={9} h={12} />{p}</PageRow>
          ))}
        </PagesPane>
        <PaneLine />
        <PanelHead>
          <DockIcon />Libraries
          <HeadIcons><MenuIcon size={14} strokeWidth={2.4} /><Search size={14} strokeWidth={2.8} /></HeadIcons>
        </PanelHead>
        <LibSelectBar>
          <LibSelect>Default<Caret $c="#111" /></LibSelect>
        </LibSelectBar>
        <LibBody>
          <LibList>
            <SectionTitle $mt={5}><ChevronDown size={12} color="#555" strokeWidth={2.4} />Common</SectionTitle>
            <LibGrid>
              {library.map(([name, icon]) => (
                <LibItem key={name}><LibIcon>{icon}</LibIcon>{name}</LibItem>
              ))}
            </LibGrid>
          </LibList>
          <ScrollTrack>
            <ScrollTop>
              <ScrollArrow $up />
              <ScrollThumb $h={41} $mt={7} />
            </ScrollTop>
            <ScrollArrow />
          </ScrollTrack>
        </LibBody>
        <PaneLine />
        <PanelHead>
          <DockIcon />Masters
          <HeadIcons><NewPageIcon /><NewFolderIcon /><Search size={14} strokeWidth={2.8} /></HeadIcons>
        </PanelHead>
        <FooterRow><MasterIcon />Footer</FooterRow>
      </LeftPanel>

      <Center>
        <TabBar>
          <Tab>Home<TabClose>✕</TabClose></Tab>
          <TabMenu><Caret $s={5} $c="#777" /></TabMenu>
        </TabBar>
        <HRuler width={1381} origin={15} />
        <Workspace>
          <VRuler height={793} />
          <Canvas>
            <SiteHeader>
              <Placeholder $w={200}>
                <Cross />
                <PlaceholderText $top={53} $pad="1px 4px">Logo</PlaceholderText>
              </Placeholder>
              <Placeholder $w={604} $ml={28}>
                <Cross />
                <PlaceholderText $top={45} $pad="0 1px 2px">banner<br />Реклама наше все</PlaceholderText>
              </Placeholder>
              <SignIn>Войти</SignIn>
            </SiteHeader>
            <SiteNav><NavLinks /></SiteNav>
            <TextFrame>
              {loremLines.map((l) => <TextLine key={l}>{l}</TextLine>)}
            </TextFrame>
            <FixedMenu>
              <NavLinks />
              <OriginMark><OriginCross /></OriginMark>
              <Handle $x={-4} $y={25} />
              <Handle $x={-4} $y={54} />
              <Handle $x={496} $y={-4} />
              <Handle $x={496} $y={54} />
              <Handle $x={995} $y={-4} />
              <Handle $x={995} $y={54} />
            </FixedMenu>
          </Canvas>
          <ScrollTrack $top>
            <ScrollThumb $h={32} $mt={17} />
          </ScrollTrack>
        </Workspace>
      </Center>

      <RightPanel>
        <PanelHead>
          <DockIcon />Inspector: Dynamic Panel
          <HeadIcons><PageIcon w={10} h={13} c="#666" /></HeadIcons>
        </PanelHead>
        <NameField>fixed menu</NameField>
        <Tabs>
          <InspectorTab $on>PROPERTIES</InspectorTab>
          <InspectorTab>NOTES</InspectorTab>
          <InspectorTab>STYLE</InspectorTab>
        </Tabs>
        <SectionTitle $mt={10} $ml={9} $gap={6}><ChevronDown size={12} color="#555" strokeWidth={2.4} />Interactions</SectionTitle>
        <LinkRow>
          <Plus size={13} color="#6fb416" strokeWidth={4} />
          <Anchor $ml={6}>Add Case</Anchor>
          <LinkSlot><LinkIcon /></LinkSlot>
          <Anchor $ml={6}>Create Link</Anchor>
        </LinkRow>
        <EventList>
          {events.map((e) => <EventRow key={e}><EventIcon />{e}</EventRow>)}
        </EventList>
        <PropSelect $mt={16}>More Events<Caret /></PropSelect>
        <Divider />
        <SectionTitle $mt={9} $ml={9} $gap={6}><ChevronDown size={12} color="#555" strokeWidth={2.4} />Dynamic Panel</SectionTitle>
        <CheckRow $mt={12}><CheckBox><CheckMark /></CheckBox>Fit to Content</CheckRow>
        <PropLabel $mt={13}>Scrollbars</PropLabel>
        <PropSelect $mt={4}>None<Caret /></PropSelect>
        <PinRow><Anchor>Pin to Browser</Anchor>Keep in front, Top, Center, 0</PinRow>
        <CheckRow $mt={16}><CheckBox><CheckMark /></CheckBox>100% Wide (browser only)</CheckRow>
        <CheckRow><CheckBox />Trigger Mouse Interaction Styles</CheckRow>
        <CheckRow><CheckBox />Disabled</CheckRow>
        <CheckRow><CheckBox />Selected</CheckRow>
        <PropLabel $mt={14}>Selection Group</PropLabel>
        <PropSelect $mt={2} $white><span /><Caret /></PropSelect>
        <PropLabel $mt={14}>Tooltip</PropLabel>
        <PropSelect $mt={3} $white />
      </RightPanel>
    </Body>

    <Overlay width={1918} height={948} viewBox="0 0 1918 948">
      <path d="M1243 179.5L1634 157L1632 153L1649 161L1632 172L1633 165L1243 190.5A5.5 5.5 0 0 1 1243 179.5Z" fill="#f5000f" />
      <ellipse cx="1700.5" cy="159" rx="50.5" ry="23" fill="none" stroke="#ee0a1c" strokeWidth="3.5" />
    </Overlay>
  </Page>
);

export default App;
